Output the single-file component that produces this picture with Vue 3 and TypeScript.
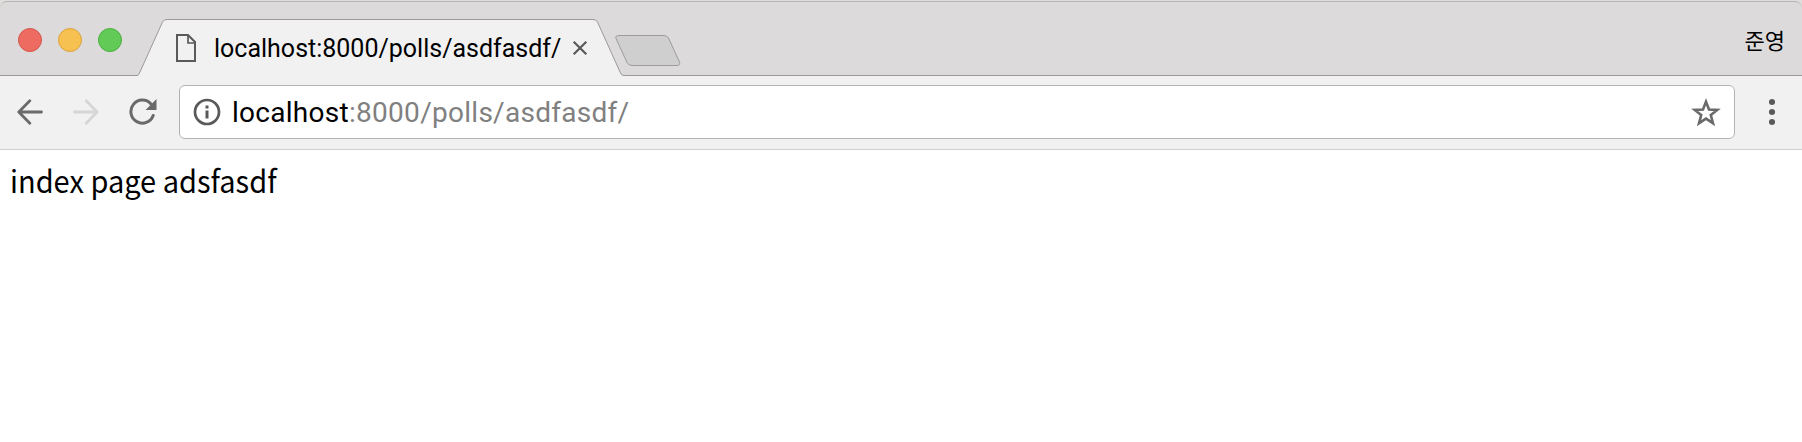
<script setup lang="ts">
const host = 'localhost'
const path = ':8000/polls/asdfasdf/'
const profile = '준영'
const content = 'index page adsfasdf'
const lights: string[] = ['close', 'minimize', 'maximize']
</script>

<template>
  <div class="window">
    <header class="strip">
      <div class="lights">
        <span v-for="l in lights" :key="l" class="light" :class="l"></span>
      </div>
      <div class="tab">
        <svg class="tab-shape" width="487" height="58" viewBox="0 0 487 58">
          <path d="M0 58 Q1.5 57.5 2.5 55 L25.5 4 Q27 1.5 30 1.5 H456 Q459 1.5 460.5 4 L483.5 55 Q484.5 57.5 487 57.5 V58 Z" fill="#f1f1f1" />
          <path d="M0 57.5 Q1.5 57.5 2.5 55 L25.5 4 Q27 1.5 30 1.5 H456 Q459 1.5 460.5 4 L483.5 55 Q484.5 57.5 487 57.5" fill="none" stroke="#9b999a" />
        </svg>
        <div class="tab-content">
          <svg class="file" width="20" height="28" viewBox="0 0 20 28" fill="none" stroke="#5a5a5a">
            <path d="M1 1H12L19 8V27H1Z" stroke-width="2" />
            <path d="M12 1V9H19" stroke-width="1.7" />
          </svg>
          <span class="title">{{ host }}{{ path }}</span>
          <svg class="x" width="16" height="16" viewBox="0 0 16 16">
            <path d="M1.7 1.7L14.3 14.3M14.3 1.7L1.7 14.3" stroke="#5a5a5a" stroke-width="2.2" />
          </svg>
        </div>
      </div>
      <svg class="new-tab" width="66" height="34" viewBox="0 0 66 34">
        <path d="M4 1.5H49Q52 1.5 53.5 4L64.5 28Q65.5 31.5 62 31.5H17Q13.5 31.5 12 28.5L1 4.5Q0 1.5 4 1.5Z" fill="#cfcfcf" stroke="#9d9b9c" />
      </svg>
      <span class="profile">{{ profile }}</span>
    </header>

    <nav class="toolbar">
      <svg class="nav-icon" width="26" height="26" viewBox="0 0 26 26" fill="none" stroke="#6a6a6a" stroke-width="2.8" stroke-linecap="round" stroke-linejoin="round">
        <path d="M24.5 13H1.8M12.8 1.8L1.8 13L12.8 24.2" />
      </svg>
      <svg class="nav-icon" width="26" height="26" viewBox="0 0 26 26" fill="none" stroke="#d6d6d6" stroke-width="2.8" stroke-linecap="round" stroke-linejoin="round">
        <path d="M1.5 13H24.2M13.2 1.8L24.2 13L13.2 24.2" />
      </svg>
      <svg class="reload" width="28" height="28" viewBox="0 0 28 28">
        <path d="M24.2 17.5A11.5 11.5 0 1 1 22 6" fill="none" stroke="#6a6a6a" stroke-width="3" stroke-linecap="round" />
        <path d="M27.5 1V12H16.5Z" fill="#6a6a6a" />
      </svg>
      <div class="address">
        <svg class="info" width="28" height="28" viewBox="0 0 28 28">
          <circle cx="14" cy="14" r="12" fill="none" stroke="#5a5a5a" stroke-width="2.7" />
          <path d="M12.5 7.5h3v3h-3zM12.5 12.5h3v8h-3z" fill="#5a5a5a" />
        </svg>
        <span class="url">{{ host }}<span class="path">{{ path }}</span></span>
        <svg class="star" width="30" height="29" viewBox="0 0 30 29">
          <path d="M15 3.7L18 11.5L26.3 11.9L19.8 17L22 25.2L15 20.6L8 25.2L10.2 17L3.7 11.9L12 11.5Z" fill="none" stroke="#6a6a6a" stroke-width="2.6" />
        </svg>
      </div>
      <svg class="menu" width="6" height="28" viewBox="0 0 6 28" fill="#5a5a5a">
        <circle cx="3" cy="4" r="3.1" />
        <circle cx="3" cy="14" r="3.1" />
        <circle cx="3" cy="24" r="3.1" />
      </svg>
    </nav>

    <main class="page"><span class="body-text">{{ content }}</span></main>
  </div>
</template>

<style>
body {
  margin: 0;
  background: #fff;
}
</style>

<style scoped>
.window {
  display: flow-root;
  width: 1802px;
  height: 442px;
  overflow: hidden;
  background: linear-gradient(#dededc 8px, #fff 8px);
  font-family: Roboto, "Noto Sans CJK KR", sans-serif;
  color: #000;
}
svg {
  display: block;
  flex: none;
}
.strip {
  display: flex;
  box-sizing: border-box;
  height: 75px;
  margin-top: 1px;
  border-top: 1px solid #b5b5b4;
  border-bottom: 1px solid #9b999a;
  border-radius: 7px 7px 0 0;
  background: #dcdadb;
}
.lights {
  display: flex;
  gap: 16px;
  width: 119px;
  padding: 26px 0 0 18px;
}
.light {
  box-sizing: border-box;
  width: 24px;
  height: 24px;
  border: 1px solid;
  border-radius: 50%;
}
.close { background: #ed6b60; border-color: #d5564c; }
.minimize { background: #f6c150; border-color: #dba33d; }
.maximize { background: #62ca57; border-color: #4bae40; }
.tab {
  display: grid;
  width: 487px;
  height: 58px;
  margin-top: 16px;
}
.tab-shape,
.tab-content {
  grid-area: 1 / 1;
}
.tab-content {
  display: flex;
  align-items: flex-start;
  padding: 16px 0 0 39px;
}
.title {
  box-sizing: border-box;
  flex: none;
  width: 376px;
  padding: 1px 0 0 18px;
  font-size: 25px;
  line-height: 28px;
  white-space: nowrap;
}
.x {
  margin-top: 6px;
}
.new-tab {
  margin: 32px 0 0 -9px;
}
.profile {
  margin: 19px 17px 0 auto;
  font: 22px/36px "Noto Sans CJK KR", sans-serif;
}
.toolbar {
  display: flex;
  align-items: center;
  box-sizing: border-box;
  height: 74px;
  border-bottom: 1px solid #d0d0d0;
  padding: 0 0 1px 17px;
  background: #f1f1f1;
}
.nav-icon {
  margin-right: 30px;
}
.reload {
  margin-right: 22px;
}
.address {
  display: flex;
  align-items: center;
  box-sizing: border-box;
  width: 1556px;
  height: 54px;
  padding: 0 13px;
  border: 1px solid #b3b3b3;
  border-radius: 6px;
  background: #fff;
}
.url {
  flex: 1;
  padding: 2px 0 0 11px;
  font-size: 28px;
  line-height: 36px;
  letter-spacing: 0.28px;
}
.path {
  color: #808080;
}
.menu {
  margin-left: 34px;
}
.page {
  padding: 10px;
  font: 31px/40px "Noto Sans CJK KR", sans-serif;
}
.body-text {
  display: inline-block;
  transform: scaleX(0.935);
  transform-origin: left;
}
</style>
